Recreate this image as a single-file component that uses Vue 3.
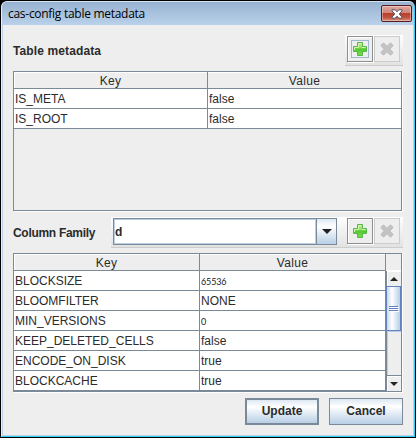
<script setup>
const meta = [
  ['IS_META', 'false'],
  ['IS_ROOT', 'false'],
]
const family = [
  ['BLOCKSIZE', '65536'],
  ['BLOOMFILTER', 'NONE'],
  ['MIN_VERSIONS', '0'],
  ['KEEP_DELETED_CELLS', 'false'],
  ['ENCODE_ON_DISK', 'true'],
  ['BLOCKCACHE', 'true'],
]
const isNumber = (v) => /^\d+$/.test(v)
</script>

<template>
  <div class="frame">
    <div class="window">
      <header class="titlebar">
        <span class="title">cas-config table metadata</span>
        <button class="close" aria-label="Close">
          <svg width="12" height="10" viewBox="0 0 12 10">
            <path d="M1 .8h3.2L6 2.8 7.8.8H11v1.1L8.3 5 11 8.1v1.1H7.8L6 7.2 4.2 9.2H1V8.1L3.7 5 1 1.9z" fill="#fff" stroke="#4b5065" stroke-width="1" />
          </svg>
        </button>
      </header>

      <main class="content">
        <div class="section first">
          <span class="label">Table metadata</span>
          <div class="toolbar">
            <button class="tool" aria-label="Add">
              <span class="focus">
                <svg width="14" height="14" viewBox="0 0 14 14">
                  <defs>
                    <linearGradient id="green" x1="0" y1="0" x2="0" y2="1">
                      <stop offset="0" stop-color="#c4f08c" /><stop offset=".42" stop-color="#91dc61" />
                      <stop offset=".5" stop-color="#50c82c" /><stop offset="1" stop-color="#7bdf4c" />
                    </linearGradient>
                  </defs>
                  <path d="M4.5.5h5v4h4v5h-4v4h-5v-4h-4v-5h4z" fill="url(#green)" stroke="#55b548" />
                  <path d="M5.5 5V1.5h3M1.5 8V5.5h4M9 5.5h3.5" fill="none" stroke="#d3f5ae" />
                </svg>
              </span>
            </button>
            <button class="tool disabled" aria-label="Delete">
              <svg width="14" height="14" viewBox="0 0 14 14"><path d="M1 3l2-2h1l3 3 3-3h1l2 2v1l-3 3 3 3v1l-2 2h-1l-3-3-3 3H3l-2-2v-1l3-3-3-3z" fill="#c3c3c3" stroke="#b9b9b9" stroke-width=".6" /></svg>
            </button>
          </div>
        </div>

        <div class="table meta">
          <div class="head"><span>Key</span><span>Value</span></div>
          <div v-for="r in meta" :key="r[0]" class="row"><span>{{ r[0] }}</span><span>{{ r[1] }}</span></div>
        </div>

        <div class="section second">
          <span class="label tight">Column Family</span>
          <div class="toolbar wide">
            <div class="combo">
              <span class="combo-value">d</span>
              <span class="combo-arrow"><svg width="10" height="5" viewBox="0 0 10 5"><path d="M0 0h10L5 5z" fill="#222" /></svg></span>
            </div>
            <button class="tool" aria-label="Add">
              <svg width="14" height="14" viewBox="0 0 14 14">
                <path d="M4.5.5h5v4h4v5h-4v4h-5v-4h-4v-5h4z" fill="url(#green)" stroke="#55b548" />
                <path d="M5.5 5V1.5h3M1.5 8V5.5h4M9 5.5h3.5" fill="none" stroke="#d3f5ae" />
              </svg>
            </button>
            <button class="tool disabled" aria-label="Delete">
              <svg width="14" height="14" viewBox="0 0 14 14"><path d="M1 3l2-2h1l3 3 3-3h1l2 2v1l-3 3 3 3v1l-2 2h-1l-3-3-3 3H3l-2-2v-1l3-3-3-3z" fill="#c3c3c3" stroke="#b9b9b9" stroke-width=".6" /></svg>
            </button>
          </div>
        </div>

        <div class="table family">
          <div class="rows">
            <div class="head"><span>Key</span><span>Value</span></div>
            <div v-for="r in family" :key="r[0]" class="row">
              <span>{{ r[0] }}</span><span :class="{ num: isNumber(r[1]) }">{{ r[1] }}</span>
            </div>
          </div>
          <div class="scroll">
            <div class="corner"></div>
            <div class="arrow up"><svg width="8" height="4" viewBox="0 0 8 4"><path d="M0 4h8L4 0z" fill="#222" /></svg></div>
            <div class="thumb"><i></i><i></i><i></i></div>
            <div class="track"></div>
            <div class="arrow down"><svg width="8" height="4" viewBox="0 0 8 4"><path d="M0 0h8L4 4z" fill="#222" /></svg></div>
          </div>
        </div>

        <footer class="actions">
          <button class="btn default">Update</button>
          <button class="btn">Cancel</button>
        </footer>
      </main>
    </div>
  </div>
</template>

<style>
body { margin: 0; background: #000; overflow: hidden; }
</style>

<style scoped>
* { box-sizing: border-box; }
button { margin: 0; padding: 0; font: inherit; color: inherit; }
svg { display: block; flex: none; }
.frame {
  width: 416px; height: 438px; padding: 1px; background: #000;
  font: 12px/14px "Liberation Sans", Arial, sans-serif; color: #2b2b2b;
}
.window {
  height: 436px; border: 1px solid #b9d1ea; border-left-color: #e6eef8; border-right-color: #35c9f2; border-bottom-color: #2fd3ee;
  border-top-color: #d5e2f0; border-radius: 6px 6px 0 0; background: #eee; overflow: hidden;
  box-shadow: inset 1px 0 #b9d1ea, inset -1px -1px #b9d1ea;
}
.titlebar {
  height: 23px; padding: 0 2px 0 6px; display: flex; align-items: flex-start; justify-content: space-between;
  background: linear-gradient(#98b2d1, #b9d1ea);
}
.title { font: 12px/24px "Open Sans", sans-serif; color: #000; letter-spacing: -.28px; }
.close {
  width: 31px; height: 17px; margin-top: 3px; border: 1px solid #571d25; border-radius: 2px;
  display: flex; align-items: center; justify-content: center;
  background: linear-gradient(#dfa79d, #d08479 48%, #b9402f 50%, #c0503b 75%, #d9907a);
  box-shadow: inset 0 0 0 1px rgba(255,255,255,.35);
}
.content { padding: 10px 11px 0; }
.section { display: flex; justify-content: space-between; height: 31px; }
.section.first { margin-bottom: 5px; }
.section.second { margin-top: 6px; margin-bottom: 5px; }
.label { font-weight: bold; line-height: 33px; letter-spacing: .12px; }
.label.tight { letter-spacing: -.3px; }
.toolbar {
  width: 58px; height: 31px; padding: 1px 3px 0 2px; display: flex; gap: 1px;
  background: linear-gradient(#fff, #e2e2e2); border-bottom: 1px solid #ccc;
}
.toolbar.wide { width: 292px; }
.tool {
  width: 26px; height: 26px; border: 1px solid #8e8e8e; background: #eee; flex: none;
  display: flex; align-items: center; justify-content: center; box-shadow: inset 1px 1px #fff, 1px 1px #fff;
}
.tool.disabled { border-color: #ccc; box-shadow: none; }
.focus { width: 18px; height: 18px; border: 1px solid #a3b8cc; display: flex; align-items: center; justify-content: center; }
.combo {
  width: 224px; height: 27px; margin-right: 9px; flex: none; border: 1px solid #7a8a99; display: flex; background: #fff;
}
.combo-value { flex: 1; border: 1px solid #b8cfe5; font-weight: bold; line-height: 25px; }
.combo-arrow {
  width: 20px; border-left: 1px solid #7a8a99; display: flex; align-items: center; justify-content: center;
  background: linear-gradient(#dde8f3, #fff 30%, #b8cfe5);
}
.table { width: 389px; border: 1px solid #7a8a99; box-shadow: 1px 1px #fff; }
.table.meta { height: 140px; }
.table.family { height: 139px; display: flex; }
.rows { width: 372px; border-right: 1px solid #7a8a99; }
.head, .row { display: grid; grid-template-columns: 194px 1fr; border-bottom: 1px solid #7a8a99; }
.family .head, .family .row { grid-template-columns: 186px 1fr; }
.head { height: 17px; box-shadow: inset 1px 1px #fff; }
.head span { text-align: center; line-height: 18px; letter-spacing: .35px; }
.row { height: 20px; background: #fff; }
.row span { padding-left: 1px; line-height: 21px; height: 19px; white-space: nowrap; }
.head span:first-child, .row span:first-child { border-right: 1px solid #7a8a99; }
.row .num { font: 9px/22px Lato, sans-serif; letter-spacing: -.15px; color: #222; }
.scroll { width: 15px; display: flex; flex-direction: column; border-left: 1px solid #7a8a99; }
.corner { height: 17px; margin-left: -1px; background: #eee; border-bottom: 1px solid #fff; }
.arrow { height: 16px; display: flex; align-items: center; justify-content: center; background: #eee; box-shadow: inset 1px 1px #fff; }
.thumb {
  height: 45px; margin: -1px 0 0 -1px; border: 1px solid #6382bf; display: flex; flex-direction: column;
  align-items: center; justify-content: center; gap: 1px; background: linear-gradient(90deg, #c5d8ec, #fff 38%, #b8cfe5);
}
.thumb i { width: 9px; height: 1px; background: #6382bf; box-shadow: 1px 1px #fff; }
.track { flex: 1; box-shadow: inset 1px 1px #b8cfe5; }
.down { border-top: 1px solid #7a8a99; }
.actions { display: flex; justify-content: flex-end; gap: 10px; margin-top: 6px; }
.btn {
  width: 74px; height: 27px; border: 1px solid #7a8a99; font-weight: bold; line-height: 25px;
  background: linear-gradient(#dde8f3, #fff 30%, #b8cfe5);
}
.btn.default { border-width: 2px; line-height: 23px; }
</style>
